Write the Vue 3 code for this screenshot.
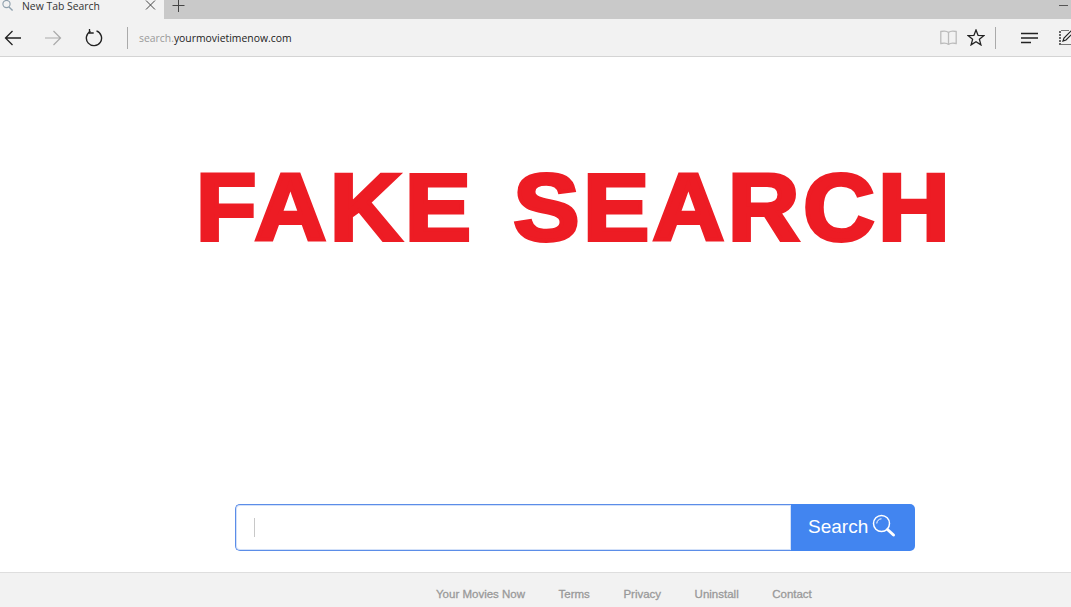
<script setup>
const links = ['Your Movies Now', 'Terms', 'Privacy', 'Uninstall', 'Contact']
</script>

<template>
  <div class="page">
    <div class="tabbar">
      <div class="tab">
        <svg class="tab-ico" width="14" height="14" viewBox="0 0 14 14"><circle cx="5.500" cy="4" r="3.600" fill="none" stroke="#8fa0ad" stroke-width="1.100"/><path d="M8 7l3.600 3.400" stroke="#8fa0ad" stroke-width="1.400" fill="none"/></svg>
        <span class="tab-title">New Tab Search</span>
        <svg class="tab-close" width="11" height="11" viewBox="0 0 11 11"><path d="M1 .5l9 9M10 .5l-9 9" stroke="#444" stroke-width="1" fill="none"/></svg>
      </div>
      <svg class="tab-new" width="13" height="13" viewBox="0 0 13 13"><path d="M6.500 0v12M.5 5.500h12" stroke="#444" stroke-width="1" fill="none"/></svg>
      <div class="tab-space"></div>
      <div class="minimize"></div>
    </div>
    <div class="toolbar">
      <svg class="ico back" width="18" height="16" viewBox="0 0 18 16"><path d="M17 8H1.500M8.500 1L1.500 8l7 7" stroke="#222" stroke-width="1.300" fill="none"/></svg>
      <svg class="ico fwd" width="18" height="16" viewBox="0 0 18 16"><path d="M1 8h15.500M9.500 1l7 7-7 7" stroke="#aaa" stroke-width="1.200" fill="none"/></svg>
      <svg class="ico reload" width="18" height="18" viewBox="0 0 18 18"><path d="M5.500 2.300A7.600 7.600 0 1 0 11.500 1.900" stroke="#222" stroke-width="1.400" fill="none"/><path d="M4.500 0v4h4.200" stroke="#222" stroke-width="1.300" fill="none"/></svg>
      <div class="sep addr-sep"></div>
      <div class="url"><span class="url-dim">search.</span>yourmovietimenow.com</div>
      <svg class="ico book" width="17" height="15" viewBox="0 0 17 15"><path d="M8.500 2.500C7 1 3.500 1 .8 1.500v12c2.700-.5 6.200-.5 7.700 1 1.500-1.500 5-1.500 7.700-1v-12C13.500 1 10 1 8.500 2.500zM8.500 2.500v12" stroke="#bcbcbc" stroke-width="1.300" fill="none"/></svg>
      <svg class="ico star" width="18" height="17" viewBox="0 0 18 17"><path d="M9 1l2.100 5.400 5.700.3-4.400 3.600 1.500 5.600L9 12.800l-4.900 3.100 1.500-5.600L1.200 6.700l5.700-.3z" stroke="#222" stroke-width="1.300" fill="none"/></svg>
      <div class="sep right-sep"></div>
      <svg class="ico hub" width="18" height="12" viewBox="0 0 18 12"><path d="M0 1.500h17M0 6h17M0 10.500h10" stroke="#222" stroke-width="1.300" fill="none"/></svg>
      <svg class="ico note" width="16" height="18" viewBox="0 0 16 18"><path d="M2 2v14" stroke="#444" stroke-width="1.600" fill="none" stroke-dasharray="2 1"/><path d="M3 1.500h8M3 15.500h13" stroke="#777" stroke-width="1.200" fill="none"/><path d="M5 12l1-3 7-7 2 2-7 7z" stroke="#222" stroke-width="1.200" fill="none"/></svg>
    </div>
    <main class="content">
      <h1 class="headline">FAKE SEARCH</h1>
      <div class="search">
        <div class="field"><span class="caret"></span></div>
        <div class="btn">
          <span>Search</span>
          <svg width="24" height="24" viewBox="0 0 24 24"><circle cx="9.500" cy="9.500" r="8" fill="none" stroke="#fff" stroke-width="1.500"/><path d="M4.800 9.500A4.700 4.700 0 0 1 9.500 4.800" fill="none" stroke="#fff" stroke-width="1"/><path d="M15.500 15.500l6 5.500" stroke="#fff" stroke-width="3" stroke-linecap="round" fill="none"/></svg>
        </div>
      </div>
    </main>
    <footer class="footer">
      <a v-for="l in links" :key="l" class="flink">{{ l }}</a>
    </footer>
  </div>
</template>

<style>
html, body { margin: 0; padding: 0; background: #fff; overflow: hidden; }
</style>

<style scoped>
.page {
  width: 1071px;
  height: 607px;
  display: flex;
  flex-direction: column;
  overflow: hidden;
  font-family: "Open Sans", "Liberation Sans", sans-serif;
}
.tabbar {
  height: 19px;
  display: flex;
  align-items: stretch;
  background: #c9c9c9;
  flex: none;
}
.tab {
  width: 164px;
  background: #f2f2f2;
  display: flex;
  align-items: flex-start;
  flex: none;
}
.tab-ico { margin-left: 1px; flex: none; }
.tab-title {
  margin-left: 7px;
  font-size: 10.400px;
  color: #333;
  line-height: 12px;
  width: 123px;
  white-space: nowrap;
}
.tab-close { flex: none; }
.tab-new { margin-left: 8px; flex: none; }
.tab-space { flex: 1; }
.minimize { width: 9px; height: 1px; background: #555; margin: 5px 3px 0 0; }
.toolbar {
  height: 37px;
  flex: none;
  background: #f2f2f2;
  border-bottom: 1px solid #d4d4d4;
  display: flex;
  align-items: center;
}
.ico { flex: none; }
.back { margin-left: 4px; }
.fwd { margin-left: 22px; }
.reload { margin-left: 23px; }
.sep { width: 1px; height: 22px; background: #aaa; flex: none; }
.addr-sep { margin-left: 24px; }
.url {
  margin-left: 11px;
  font-size: 10.400px;
  color: #222;
  flex: 1;
  white-space: nowrap;
}
.url-dim { color: #9a9a9a; }
.book { margin-right: 10px; }
.star { margin-right: 10px; }
.right-sep { margin-right: 25px; }
.hub { margin-right: 19px; }
.note { margin-right: -3px; }
.content {
  flex: 1;
  min-height: 0;
  display: flex;
  flex-direction: column;
  align-items: flex-start;
  background: #fff;
}
.headline {
  margin: 101px 0 0 196px;
  font-family: "Liberation Sans", Arial, sans-serif;
  font-weight: 700;
  font-size: 94px;
  line-height: 100px;
  color: #ed1c24;
  white-space: nowrap;
  letter-spacing: 3.700px;
  word-spacing: 7px;
  -webkit-text-stroke: 4px #ed1c24;
  transform: scaleX(1.05);
  transform-origin: left center;
}
.search {
  margin: 246px 0 0 235px;
  width: 680px;
  height: 47px;
  display: flex;
}
.field {
  flex: 1;
  box-sizing: border-box;
  border: 1px solid #5b8de8;
  border-right: none;
  border-radius: 5px 0 0 5px;
  box-shadow: inset 0 0 0 1px rgba(79, 134, 230, .25);
  background: #fff;
  display: flex;
  align-items: center;
  padding-left: 18px;
}
.caret { width: 1px; height: 19px; background: #c8c8c8; }
.btn {
  width: 124px;
  flex: none;
  background: #4285f0;
  border-radius: 0 5px 5px 0;
  color: #fff;
  display: flex;
  align-items: center;
  font-family: "Liberation Sans", Arial, sans-serif;
  font-size: 19px;
  line-height: 21px;
  padding: 0 0 2px 17px;
  box-sizing: border-box;
  gap: 4px;
}
.btn svg { margin-top: -1px; }
.footer {
  height: 19px;
  flex: none;
  border-top: 1px solid #dedede;
  background: #f2f2f2;
  display: flex;
  align-items: flex-start;
  padding: 15px 0 0 436px;
  gap: 33.500px;
}
.flink {
  font-family: "Liberation Sans", Arial, sans-serif;
  font-size: 11.500px;
  color: #999;
  -webkit-text-stroke: 0.3px #999;
  white-space: nowrap;
}
</style>
